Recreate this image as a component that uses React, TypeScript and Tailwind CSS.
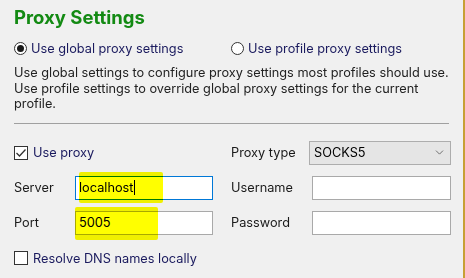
import { ChevronDown } from 'lucide-react';

function Radio({ checked, label }: { checked?: boolean; label: string }) {
  return (
    <label className="flex items-center gap-[4px]">
      <span className="flex h-[13px] w-[13px] items-center justify-center rounded-full border border-[#333] bg-white">
        {checked && <span className="h-[7px] w-[7px] rounded-full bg-[#1a1a1a]" />}
      </span>
      <span className="text-[#1a1a5e]">{label}</span>
    </label>
  );
}

function Check({ checked, label }: { checked?: boolean; label: string }) {
  return (
    <label className="flex items-center gap-[5px]">
      <span className="flex h-[14px] w-[14px] items-center justify-center border border-[#333] bg-white">
        {checked && (
          <svg width="12" height="12" viewBox="0 0 12 12" fill="none">
            <path d="M1.5 6 L4.5 9 L10.5 2.5" stroke="#333" strokeWidth="1.3" />
          </svg>
        )}
      </span>
      <span className="text-[#1a1a5e]">{label}</span>
    </label>
  );
}

function Field({ value, focused, caret }: { value?: string; focused?: boolean; caret?: boolean }) {
  return (
    <div
      className={`flex h-[24px] items-center border bg-white px-[3px] ${
        focused ? 'border-[#0078d7]' : 'border-[#a9a9a9]'
      }`}
    >
      <span className="text-black">{value}</span>
      {caret && <span className="ml-px h-[15px] w-px bg-black" />}
    </div>
  );
}

export default function App() {
  return (
    <div className="relative h-[278px] w-[465px] overflow-hidden bg-[#f0f0f0] font-['Inter',sans-serif] text-[12.75px] text-[#1a1a1a]">
      <div className="border-r-2 border-[#c7a035] h-full pl-[14px] pr-[14px] pt-[5px]">
        <h1 className="text-[18.5px] font-bold leading-[25px] text-[#138a13]">Proxy Settings</h1>

        {/* scope */}
        <div className="mt-[9px] grid grid-cols-[217px_1fr]">
          <Radio checked label="Use global proxy settings" />
          <Radio label="Use profile proxy settings" />
        </div>

        <p className="mt-[7px] whitespace-nowrap leading-[15.6px] text-[#222]">
          Use global settings to configure proxy settings most profiles should use.
          <br />
          Use profile settings to override global proxy settings for the current
          <br />
          profile.
        </p>

        <div className="mt-[11px] h-px w-[435px] bg-[#a0a0a0]" />

        {/* proxy form */}
        <div className="mt-[17px] grid grid-cols-[61px_138px_18px_81px_139px] items-center gap-y-[11px]">
          <div className="col-span-2">
            <Check checked label="Use proxy" />
          </div>
          <div />
          <span>Proxy type</span>
          <div className="-ml-[3px] flex h-[24px] items-center justify-between border border-[#adadad] bg-[#e5e5e5] pl-[4px] pr-[4px]">
            <span className="text-black">SOCKS5</span>
            <ChevronDown size={13} strokeWidth={1.5} className="text-[#555]" />
          </div>

          <span>Server</span>
          <div className="relative">
            <Field value="localhost" focused caret />
            <span className="pointer-events-none absolute left-[4px] top-[-4px] h-[31px] w-[84px] rounded-[2px] bg-[#ffff00] mix-blend-multiply" />
          </div>
          <div />
          <span>Username</span>
          <Field />

          <span>Port</span>
          <div className="relative">
            <Field value="5005" />
            <span className="pointer-events-none absolute left-0 top-[-4px] h-[33px] w-[83px] rounded-[2px] bg-[#ffff00] mix-blend-multiply" />
          </div>
          <div />
          <span>Password</span>
          <Field />
        </div>

        <div className="mt-[14px]">
          <Check label="Resolve DNS names locally" />
        </div>
      </div>
    </div>
  );
}
